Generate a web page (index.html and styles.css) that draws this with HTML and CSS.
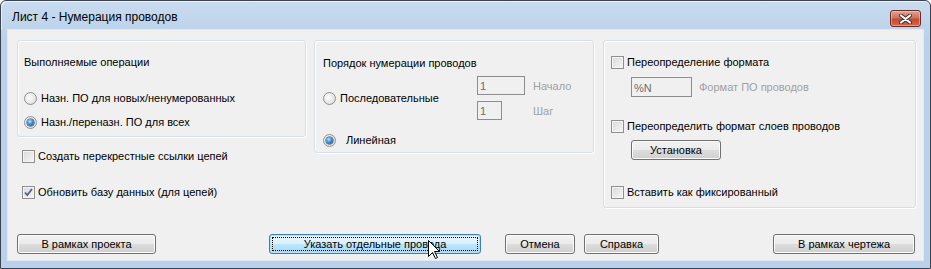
FILE: index.html
```html
<!DOCTYPE html>
<html><head><meta charset="utf-8"/>
<title>Лист 4 - Нумерация проводов</title>
<link rel="stylesheet" href="styles.css">
</head>
<body>
<div class="window">
	<div class="titlebar">
		<span class="title">Лист 4 - Нумерация проводов</span>
		<a class="close"><svg width="15" height="10" viewBox="0 0 15 10"><path d="M3 1.5 L12 8.5 M12 1.5 L3 8.5" stroke="#4a2a24" stroke-width="4" stroke-linecap="round"/><path d="M3 1.5 L12 8.5 M12 1.5 L3 8.5" stroke="#fff" stroke-width="2.2" stroke-linecap="round"/></svg></a>
	</div>
	<div class="client">
		<div class="main">
			<div class="col1">
				<div class="group g1">
					<div class="line">Выполняемые операции</div>
					<label class="line opt first"><span class="radio"></span>Назн. ПО для новых/ненумерованных</label>
					<label class="line opt second"><span class="radio on"></span>Назн./переназн. ПО для всех</label>
				</div>
				<label class="line chk cross"><span class="check"></span>Создать перекрестные ссылки цепей</label>
				<label class="line chk update"><span class="check"><svg width="11" height="11" viewBox="0 0 11 11"><path d="M2 5.5 L4.3 8 L9 2" fill="none" stroke="#4e6490" stroke-width="1.8"/></svg></span>Обновить базу данных (для цепей)</label>
			</div>
			<div class="group g2">
				<div class="line">Порядок нумерации проводов</div>
				<div class="seq">
					<label class="line opt seqlabel"><span class="radio"></span>Последовательные</label>
					<div class="fields">
						<span class="box wide">1</span><span class="line off">Начало</span>
						<span class="box narrow">1</span><span class="line off">Шаг</span>
					</div>
				</div>
				<label class="line opt linear"><span class="radio on"></span>Линейная</label>
			</div>
			<div class="group g3">
				<label class="line chk"><span class="check"></span>Переопределение формата</label>
				<div class="fmt">
					<span class="box fmtbox">%N</span><span class="line off">Формат ПО проводов</span>
				</div>
				<label class="line chk layers"><span class="check"></span>Переопределить формат слоев проводов</label>
				<a class="button setup">Установка</a>
				<label class="line chk fixed"><span class="check"></span>Вставить как фиксированный</label>
			</div>
		</div>
		<div class="buttons">
			<a class="button b-project">В рамках проекта</a>
			<a class="button b-pick focus"><span>Указать отдельные провода</span></a>
			<a class="button b-cancel">Отмена</a>
			<a class="button b-help">Справка</a>
			<a class="button b-drawing">В рамках чертежа</a>
		</div>
	</div>
	<svg class="cursor" width="13" height="20" viewBox="0 0 13 20"><path d="M0.5 0.5 L0.5 16.5 L4.5 12.5 L7.5 18.5 L9.5 17.5 L6.5 11.5 L11.5 11.5 Z" fill="#fff" stroke="#000" stroke-width="1"/></svg>
</div>
</body>
</html>
```

FILE: styles.css
```css
body {
	margin: 0px;
	font: 11px "Liberation Sans", Arial, sans-serif;
	color: #000;
	background: #fff;
}
.window {
	position: relative;
	box-sizing: border-box;
	width: 931px;
	height: 269px;
	border: 1px solid #3c4450;
	border-radius: 6px 6px 0 0;
	background: linear-gradient(#c9dbef, #b9d1ea 40px, #b9d1ea);
	display: flex;
	flex-direction: column;
}
.titlebar {
	height: 29px;
	display: flex;
	justify-content: space-between;
	align-items: flex-start;
	box-shadow: inset 1px 1px 0 rgba(255,255,255,.6);
	border-radius: 6px 6px 0 0;
}
.title {
	font-size: 12px;
	margin: 9px 0 0 11px;
	line-height: 15px;
}
.close {
	display: flex;
	align-items: center;
	justify-content: center;
	box-sizing: border-box;
	width: 31px;
	height: 17px;
	margin: 9px 9px 0 0;
	border: 1px solid #6b2b22;
	border-radius: 3px;
	background: linear-gradient(#e2a08f, #d07260 45%, #c24b35 55%, #cf6a4f);
	box-shadow: inset 0 0 0 1px rgba(255,255,255,.35);
}
.client {
	box-sizing: border-box;
	height: 230px;
	margin: 0 7px 8px 7px;
	background: #f0f0f0;
	padding: 10px 0 0 9px;
	box-shadow: 0 0 0 1px #dfe8f3;
}
.main {
	display: flex;
	align-items: flex-start;
}
.group {
	box-sizing: border-box;
	border: 1px solid #d5dfe5;
	border-radius: 3px;
	box-shadow: inset 1px 1px 0 #fff, 1px 1px 0 #fff;
}
.line {
	display: flex;
	align-items: center;
	height: 14px;
	line-height: 14px;
	white-space: nowrap;
}
.off {
	color: #a0a0a0;
}
.radio {
	position: relative;
	box-sizing: border-box;
	width: 13px;
	height: 13px;
	margin-right: 4px;
	border-radius: 50%;
	border: 1px solid #8f9090;
	background: radial-gradient(circle at 40% 40%, #fdfdfd, #e6e6e6 60%, #d2d2d2);
	flex: none;
}
.radio.on::after {
	content: "";
	position: absolute;
	left: 2px;
	top: 2px;
	width: 7px;
	height: 7px;
	border-radius: 50%;
	background: radial-gradient(circle at 40% 35%, #b8e3fb, #3c8fd2 45%, #174a86);
	box-shadow: 0 0 0 0.5px #0f3c6e;
}
.check {
	display: flex;
	align-items: center;
	justify-content: center;
	box-sizing: border-box;
	width: 13px;
	height: 13px;
	margin-right: 3px;
	border: 1px solid #8f8f8f;
	background: linear-gradient(135deg, #d9d9d9, #f6f6f6);
	box-shadow: inset 0 0 0 1px #f4f4f4;
	flex: none;
}
.g1 {
	width: 289px;
	height: 97px;
	padding: 14px 0 0 6px;
}
.g1 .first {
	margin-top: 22px;
}
.g1 .second {
	margin-top: 10px;
}
.chk.cross {
	margin: 12px 0 0 5px;
}
.chk.update {
	margin: 22px 0 0 5px;
}
.g2 {
	width: 280px;
	height: 113px;
	margin-left: 8px;
	padding: 15px 0 0 8px;
}
.seq {
	display: flex;
	align-items: center;
	margin-top: 6px;
}
.seqlabel {
	width: 154px;
}
.fields {
	display: grid;
	grid-template-columns: 56px auto;
	row-gap: 6px;
	align-items: center;
}
.box {
	box-sizing: border-box;
	height: 19px;
	padding: 2px 2px 0;
	border: 1px solid #8d8d8d;
	background: #f0f0f0;
	color: #6d6d6d;
	line-height: 14px;
}
.wide {
	width: 48px;
}
.narrow {
	width: 25px;
}
.linear {
	margin-top: 13px;
}
.linear .radio {
	margin-right: 10px;
}
.g3 {
	width: 313px;
	height: 168px;
	margin-left: 9px;
	padding: 14px 0 0 7px;
}
.fmt {
	display: flex;
	align-items: center;
	margin: 8px 0 0 20px;
}
.fmtbox {
	width: 61px;
	height: 20px;
	margin-right: 7px;
	padding-top: 3px;
}
.layers {
	margin-top: 22px;
}
.button {
	display: flex;
	align-items: center;
	justify-content: center;
	box-sizing: border-box;
	height: 20px;
	border: 1px solid #707070;
	border-radius: 3px;
	background: linear-gradient(#f2f2f2, #ebebeb 50%, #dddddd 50%, #cfcfcf);
	box-shadow: inset 0 0 0 1px #fcfcfc;
	white-space: nowrap;
	cursor: default;
}
.setup {
	width: 90px;
	margin: 7px 0 0 20px;
}
.fixed {
	margin-top: 25px;
}
.buttons {
	display: flex;
	margin-top: 26px;
}
.b-project {
	width: 139px;
}
.b-pick {
	width: 212px;
	margin-left: 113px;
	border-color: #3c7fb1;
	background: linear-gradient(#eaf6fd, #d9f0fc 50%, #bee6fd 50%, #a7d9f5);
	box-shadow: inset 0 0 0 1px #b4dff7;
	padding: 2px;
}
.b-pick span {
	flex: 1;
	align-self: stretch;
	display: flex;
	align-items: center;
	justify-content: center;
	border: 1px dotted #000;
}
.b-cancel {
	width: 70px;
	margin-left: 24px;
}
.b-help {
	width: 75px;
	margin-left: 9px;
}
.b-drawing {
	width: 142px;
	margin-left: 114px;
}
.cursor {
	position: absolute;
	left: 427px;
	top: 239px;
}
```
